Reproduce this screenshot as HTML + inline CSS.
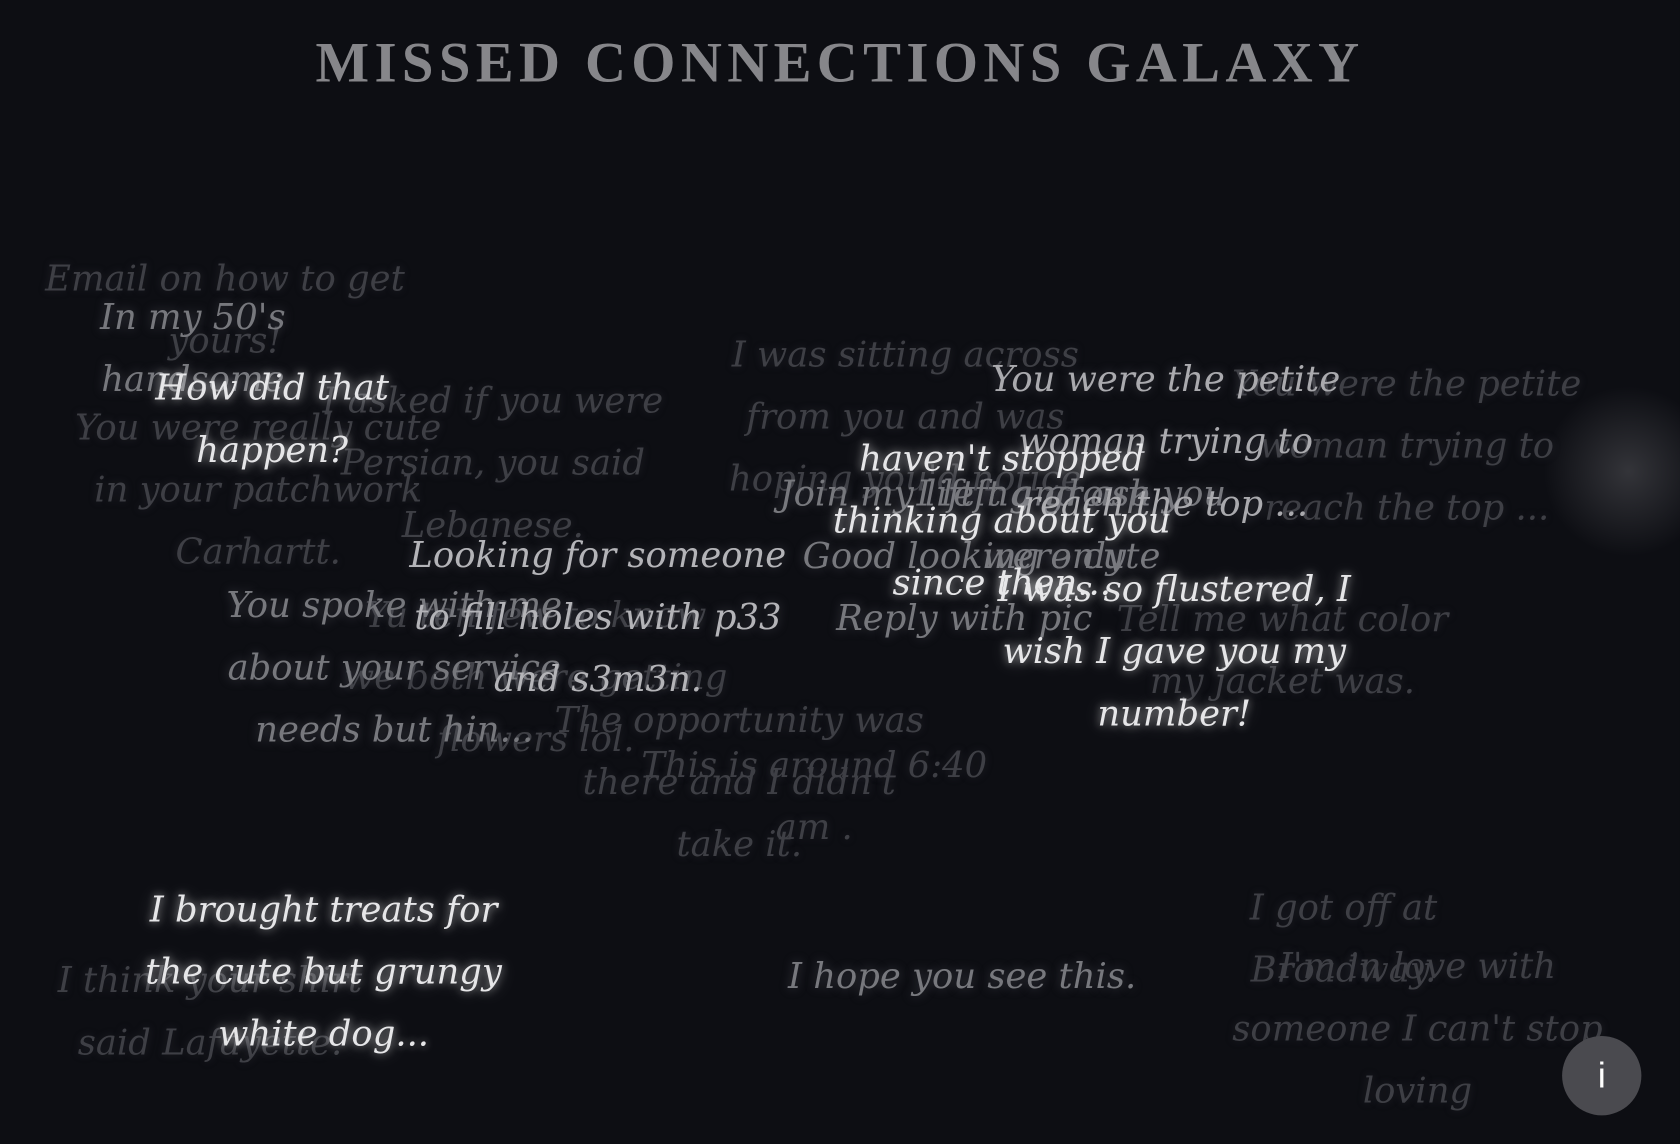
<!DOCTYPE html>
<html><head><meta charset="utf-8"><style>
html,body{margin:0;padding:0;background:#0d0e13;width:1680px;height:1144px;overflow:hidden}
#w{position:absolute;left:0;top:0;width:1568px;height:1068px;transform:scale(1.0714);transform-origin:0 0;background:#0d0e13}
.t{position:absolute;width:700px;margin-left:-350px;text-align:center;font-family:"DejaVu Serif","Liberation Serif",serif;font-style:italic;font-size:33px;line-height:58px;white-space:nowrap}
.d{color:#3e3f45;text-shadow:0 0 8px rgba(80,80,90,.3)}
.m{color:#77787d;text-shadow:0 0 10px rgba(150,150,160,.35)}
.b{color:#e6e6e8;text-shadow:0 0 8px rgba(255,255,255,.55),0 0 18px rgba(255,255,255,.3)}
h1{position:absolute;left:0;width:1568px;top:29px;margin:0;text-align:center;font-family:"Liberation Serif",serif;font-weight:bold;font-size:53px;letter-spacing:5px;color:#86868a}
.blob{position:absolute;left:1440px;top:360px;width:160px;height:160px;border-radius:50%;background:radial-gradient(circle,rgba(90,90,95,.5),rgba(13,14,19,0) 70%)}
.info{position:absolute;left:1458px;top:967px;width:74px;height:74px;border-radius:50%;background:#4a4a4f;color:#fff;font-family:"Liberation Sans",sans-serif;font-size:34px;line-height:74px;text-align:center}
</style></head><body><div id="w">
<h1>MISSED CONNECTIONS GALAXY</h1>
<div class="blob"></div>
<div class="t d" style="left:210px;top:231px">Email on how to get<br>yours!</div>
<div class="t d" style="left:241px;top:370px">You were really cute<br>in your patchwork<br>Carhartt.</div>
<div class="t d" style="left:460px;top:345px">I asked if you were<br>Persian, you said<br>Lebanese.</div>
<div class="t d" style="left:845px;top:302px">I was sitting across<br>from you and was<br>hoping you'd notice</div>
<div class="t d" style="left:1313px;top:329px">You were the petite<br>woman trying to<br>reach the top ...</div>
<div class="t d" style="left:1197px;top:549px">Tell me what color<br>my jacket was.</div>
<div class="t d" style="left:500px;top:545px">Yu ten few to know<br>we both were getting<br>flowers lol.</div>
<div class="t d" style="left:690px;top:643px">The opportunity was<br>there and I didn't<br>take it.</div>
<div class="t d" style="left:760px;top:685px">This is around 6:40<br>am .</div>
<div class="t d" style="left:196px;top:886px">I think your shirt<br>said Lafayette.</div>
<div class="t d" style="left:1254px;top:818px">I got off at<br>Broadway.</div>
<div class="t d" style="left:1323px;top:873px">I'm in love with<br>someone I can't stop<br>loving</div>
<div class="t m" style="left:368px;top:536px">You spoke with me<br>about your service<br>needs but hin...</div>
<div class="t m" style="left:900px;top:432px">Join my lifting group<br>Good looking only<br>Reply with pic</div>
<div class="t m" style="left:180px;top:267px">In my 50's<br>handsome</div>
<div class="t m" style="left:1000px;top:432px">I left and ask you<br>were cute</div>
<div class="t m" style="left:898px;top:882px">I hope you see this.</div>
<div class="t m" style="left:1088px;top:325px;color:#aaaaae">You were the petite<br>woman trying to<br>reach the top ...</div>
<div class="t m" style="left:558px;top:489px;color:#b4b4b8">Looking for someone<br>to fill holes with p33<br>and s3m3n.</div>
<div class="t b" style="left:254px;top:333px">How did that<br>happen?</div>
<div class="t b" style="left:935px;top:399px">haven't stopped<br>thinking about you<br>since then...</div>
<div class="t b" style="left:1096px;top:521px">I was so flustered, I<br>wish I gave you my<br>number!</div>
<div class="t b" style="left:302px;top:820px">I brought treats for<br>the cute but grungy<br>white dog...</div>
<div class="info">i</div>
</div></body></html>
